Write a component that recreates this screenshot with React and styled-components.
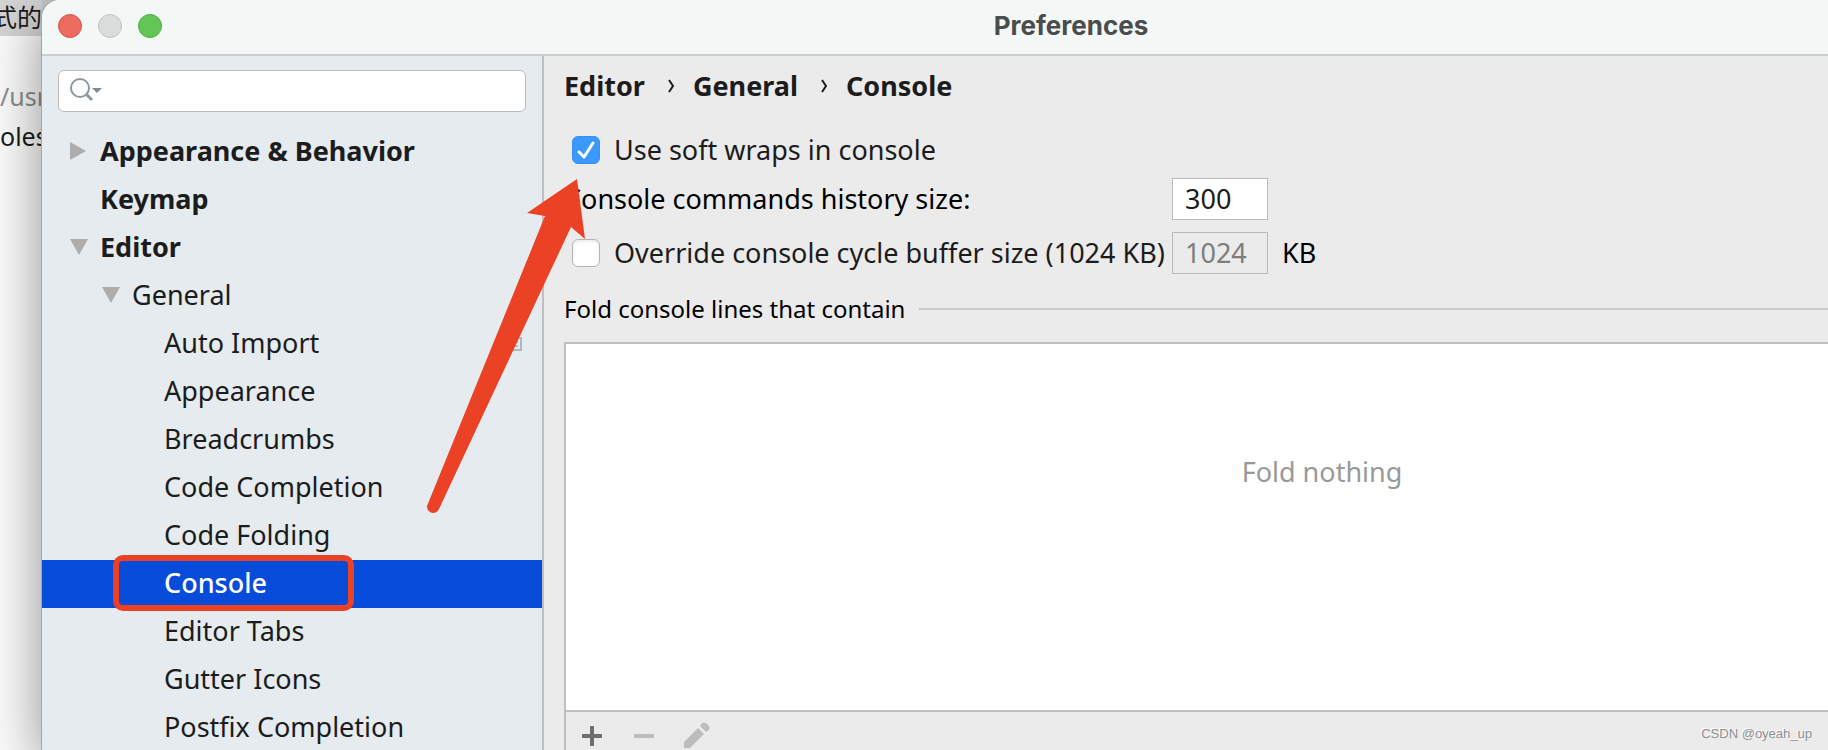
import { useState } from "react";
import styled, { createGlobalStyle } from "styled-components";

const GlobalStyle = createGlobalStyle`
  * {
    box-sizing: border-box;
  }
  body {
    margin: 0;
    overflow: hidden;
    font-family: "Noto Sans", "Noto Sans CJK SC", sans-serif;
    font-size: 27px;
    line-height: 32px;
    color: #1c1c1c;
  }
`;

const Desktop = styled.div`
  position: relative;
  display: flex;
  height: 100vh;
  min-height: 750px;
  overflow: hidden;
  background: #c9c9c9;
`;

const Backdrop = styled.aside`
  flex: none;
  width: 42px;
  display: flex;
  flex-direction: column;
  overflow: hidden;
  background: #fbfbfb;
  white-space: nowrap;
  font-size: 25px;
`;

const BackdropTitle = styled.div`
  height: 36px;
  display: flex;
  justify-content: flex-end;
  background: #d4d4d4;
  font-family: "Noto Sans CJK SC", sans-serif;
`;

const BackdropLine = styled.div`
  height: 40px;
  line-height: 40px;
  color: ${(props) => (props.$muted ? "#8c8c8c" : "#1c1c1c")};
  &:nth-child(2) {
    margin-top: 40px;
  }
`;

const Window = styled.div`
  position: relative;
  flex: none;
  width: calc(100% + 230px);
  display: flex;
  flex-direction: column;
  border-top-left-radius: 18px;
  background: #ebebeb;
  box-shadow: 0 0 0 1px #a3a5a7, 0 14px 56px rgba(0, 0, 0, 0.44);
  overflow: hidden;
`;

const TitleBar = styled.header`
  flex: none;
  height: 56px;
  display: grid;
  grid-template-columns: 1fr auto 1fr;
  align-items: center;
  padding: 0 16px 2px;
  background: #f3f7f6;
  border-bottom: 2px solid #cccfcf;
`;

const Lights = styled.div`
  display: flex;
  gap: 16px;
`;

const Light = styled.button`
  width: 24px;
  height: 24px;
  padding: 0;
  border: 1px solid ${(props) => props.$edge};
  border-radius: 50%;
  background: ${(props) => props.$fill};
`;

const Title = styled.h1`
  margin: 0;
  font-family: Inter, sans-serif;
  font-size: 26px;
  font-weight: 700;
  line-height: 32px;
  color: #4a4d4c;
`;

const Body = styled.div`
  flex: 1;
  display: flex;
  min-height: 0;
`;

const Sidebar = styled.nav`
  flex: none;
  width: 502px;
  overflow: hidden;
  background: #e5ebef;
  border-right: 2px solid #bdbfc1;
`;

const SearchBox = styled.label`
  display: flex;
  align-items: center;
  height: 42px;
  margin: 14px 16px 16px;
  padding: 0 0 2px 10px;
  background: #fff;
  border: 1px solid #b9bdc0;
  border-radius: 6px;
`;

const SearchInput = styled.input`
  flex: 1;
  min-width: 0;
  border: 0;
  outline: 0;
  background: transparent;
  font: inherit;
`;

const Tree = styled.ul`
  margin: 0;
  padding: 0;
  list-style: none;
`;

const TreeRow = styled.li`
  position: relative;
  display: flex;
  align-items: center;
  height: 48px;
  padding: 0 20px 3px ${(props) => 16 + props.$level * 32}px;
  background: ${(props) => (props.$selected ? "#074bdb" : "transparent")};
  color: ${(props) => (props.$selected ? "#fff" : "#1c1c1c")};
  font-weight: ${(props) =>
    props.$bold ? 700 : props.$selected ? 500 : 400};
`;

const Twisty = styled.span`
  display: flex;
  justify-content: center;
  width: 42px;
`;

const RowLabel = styled.span`
  flex: 1;
  white-space: nowrap;
`;

const Highlight = styled.span`
  position: absolute;
  left: 71px;
  top: -5px;
  width: 241px;
  height: 56px;
  border: 6px solid #eb4124;
  border-radius: 10px;
`;

const Content = styled.main`
  flex: 1;
  min-width: 0;
  display: flex;
  flex-direction: column;
  padding: 14px 20px 0;
`;

const Breadcrumb = styled.div`
  display: flex;
  align-items: center;
  height: 32px;
  font-weight: 700;
`;

const Separator = styled.svg`
  margin: 0 18px 0 22px;
`;

const Form = styled.div`
  display: grid;
  grid-template-columns: 608px 96px 1fr;
  align-items: center;
  row-gap: 12px;
  margin-top: 32px;
  color: #000;
  white-space: nowrap;
`;

const CheckLabel = styled.label`
  display: flex;
  align-items: center;
  gap: 14px;
  padding-left: 8px;
  color: #1c1c1c;
`;

const CheckRow = styled(CheckLabel)`
  grid-column: 1 / -1;
`;

const Checkbox = styled.input`
  appearance: none;
  flex: none;
  width: 28px;
  height: 28px;
  margin: 0;
  border: 1px solid #b5b5b5;
  border-radius: 6px;
  background: #fff;
  box-shadow: inset 0 2px 3px rgba(0, 0, 0, 0.08);
  &:checked {
    border-color: #3a90f2;
    background: #3b99fc
      url("data:image/svg+xml,%3Csvg xmlns='http://www.w3.org/2000/svg' viewBox='0 0 26 26'%3E%3Cpath d='M6 15l5 5L20 6' fill='none' stroke='white' stroke-width='3' stroke-linecap='round' stroke-linejoin='round'/%3E%3C/svg%3E");
    box-shadow: none;
  }
`;

const NumberField = styled.input`
  width: 96px;
  height: 42px;
  padding: 0 12px 2px;
  border: 1px solid #b9b9b9;
  border-radius: 0;
  background: #fff;
  font: inherit;
  color: #1c1c1c;
  &:disabled {
    background: #ebebeb;
    color: #7d7d7d;
  }
`;

const Unit = styled.span`
  padding-left: 14px;
`;

const GroupTitle = styled.h2`
  display: flex;
  align-items: center;
  gap: 14px;
  margin: 19px 0 17px;
  font-size: 24px;
  font-weight: 400;
  color: #000;
  &::after {
    content: "";
    flex: 1;
    border-top: 2px solid #cacaca;
  }
`;

const FoldPanel = styled.section`
  flex: 1;
  display: flex;
  flex-direction: column;
  border: 2px solid #bfbfbf;
  border-bottom: 0;
`;

const FoldList = styled.div`
  flex: 1;
  display: flex;
  justify-content: center;
  padding-top: 112px;
  background: #fff;
  color: #999;
`;

const FoldToolbar = styled.div`
  flex: none;
  display: flex;
  align-items: center;
  gap: 24px;
  height: 40px;
  padding: 10px 12px 0;
  border-top: 2px solid #bfbfbf;
`;

const ToolButton = styled.button`
  display: flex;
  width: 28px;
  height: 28px;
  padding: 0;
  border: 0;
  background: none;
  color: ${(props) => (props.disabled ? "#bdbdbd" : "#6e6e6e")};
`;

const Arrow = styled.svg`
  position: absolute;
  left: 420px;
  top: 178px;
  pointer-events: none;
`;

const Watermark = styled.span`
  position: absolute;
  right: 16px;
  bottom: 6px;
  font-family: "Liberation Sans", sans-serif;
  font-size: 13px;
  line-height: 20px;
  color: #8e8e8e;
  text-shadow: -1px -1px 0 #fff;
`;

const items = [
  { name: "Appearance & Behavior", level: 0, bold: true, state: "closed" },
  { name: "Keymap", level: 0, bold: true },
  { name: "Editor", level: 0, bold: true, state: "open" },
  { name: "General", level: 1, state: "open" },
  { name: "Auto Import", level: 2, project: true },
  { name: "Appearance", level: 2 },
  { name: "Breadcrumbs", level: 2 },
  { name: "Code Completion", level: 2 },
  { name: "Code Folding", level: 2 },
  { name: "Console", level: 2, selected: true },
  { name: "Editor Tabs", level: 2 },
  { name: "Gutter Icons", level: 2 },
  { name: "Postfix Completion", level: 2 },
];

const SearchIcon = () => (
  <svg width="34" height="26" viewBox="0 0 34 26" fill="none">
    <circle cx="11" cy="11" r="9" stroke="#8b98a1" strokeWidth="2" />
    <path d="M17 17l6 6" stroke="#8b98a1" strokeWidth="3" />
    <path d="M23 11h10l-5 5z" fill="#7f8b93" />
  </svg>
);

const Triangle = ({ open }) => (
  <svg width="18" height="18" viewBox="0 0 18 18" fill="#adadad">
    {open ? <path d="M0 1h18L9 17z" /> : <path d="M0 0v18l16-9z" />}
  </svg>
);

const ProjectIcon = () => (
  <svg width="18" height="18" viewBox="0 0 18 18" fill="none">
    <path d="M1 4h16v12H1z" stroke="#a9b8c1" strokeWidth="2" />
    <path d="M4 8h10M4 12h10" stroke="#a9b8c1" strokeWidth="2" />
  </svg>
);

const Chevron = () => (
  <Separator width="8" height="16" viewBox="0 0 8 16" fill="none">
    <path d="M2 2l4 6-4 6" stroke="#1c1c1c" strokeWidth="2" />
  </Separator>
);

function App() {
  const [softWraps, setSoftWraps] = useState(true);
  const [override, setOverride] = useState(false);

  return (
    <>
      <GlobalStyle />
      <Desktop>
        <Backdrop>
          <BackdropTitle>式的</BackdropTitle>
          <BackdropLine $muted>/usr</BackdropLine>
          <BackdropLine>oles</BackdropLine>
        </Backdrop>
        <Window>
          <TitleBar>
            <Lights>
              <Light aria-label="Close" $fill="#ed6b5f" $edge="#d35549" />
              <Light aria-label="Minimize" $fill="#d9dddc" $edge="#bfc3c2" />
              <Light aria-label="Zoom" $fill="#62c555" $edge="#4fae43" />
            </Lights>
            <Title>Preferences</Title>
          </TitleBar>
          <Body>
            <Sidebar>
              <SearchBox>
                <SearchIcon />
                <SearchInput type="text" aria-label="Search settings" />
              </SearchBox>
              <Tree>
                {items.map((item) => (
                  <TreeRow
                    key={item.name}
                    $level={item.level}
                    $bold={item.bold}
                    $selected={item.selected}
                  >
                    <Twisty>
                      {item.state && <Triangle open={item.state === "open"} />}
                    </Twisty>
                    <RowLabel>{item.name}</RowLabel>
                    {item.project && <ProjectIcon />}
                    {item.selected && <Highlight />}
                  </TreeRow>
                ))}
              </Tree>
            </Sidebar>
            <Content>
              <Breadcrumb>
                <span>Editor</span>
                <Chevron />
                <span>General</span>
                <Chevron />
                <span>Console</span>
              </Breadcrumb>
              <Form>
                <CheckRow>
                  <Checkbox
                    type="checkbox"
                    checked={softWraps}
                    onChange={(e) => setSoftWraps(e.target.checked)}
                  />
                  Use soft wraps in console
                </CheckRow>
                <label htmlFor="history">Console commands history size:</label>
                <NumberField id="history" type="text" defaultValue="300" />
                <span />
                <CheckLabel>
                  <Checkbox
                    type="checkbox"
                    checked={override}
                    onChange={(e) => setOverride(e.target.checked)}
                  />
                  Override console cycle buffer size (1024 KB)
                </CheckLabel>
                <NumberField
                  type="text"
                  aria-label="Buffer size"
                  defaultValue="1024"
                  disabled={!override}
                />
                <Unit>KB</Unit>
              </Form>
              <GroupTitle>Fold console lines that contain</GroupTitle>
              <FoldPanel>
                <FoldList>Fold nothing</FoldList>
                <FoldToolbar>
                  <ToolButton aria-label="Add">
                    <svg width="28" height="28" viewBox="0 0 28 28">
                      <path d="M4 14h20M14 4v20" stroke="currentColor" strokeWidth="4" />
                    </svg>
                  </ToolButton>
                  <ToolButton aria-label="Remove" disabled>
                    <svg width="28" height="28" viewBox="0 0 28 28">
                      <path d="M4 14h20" stroke="currentColor" strokeWidth="4" />
                    </svg>
                  </ToolButton>
                  <ToolButton aria-label="Edit" disabled>
                    <svg width="28" height="28" viewBox="0 0 28 28" fill="currentColor">
                      <path d="M2 26v-6L16 6l6 6L8 26z" />
                      <path d="M18 4l2-3q2-1 4 0l3 3q1 2 0 4l-3 2z" />
                    </svg>
                  </ToolButton>
                </FoldToolbar>
              </FoldPanel>
            </Content>
          </Body>
        </Window>
        <Arrow width="168" height="336" viewBox="420 178 168 336">
          <path
            d="M577 179L527 213L545 216L427 506Q427 512 433 513Q437 513 439 509L571 227L585 239Z"
            fill="#eb4124"
          />
        </Arrow>
        <Watermark>CSDN @oyeah_up</Watermark>
      </Desktop>
    </>
  );
}

export default App;
